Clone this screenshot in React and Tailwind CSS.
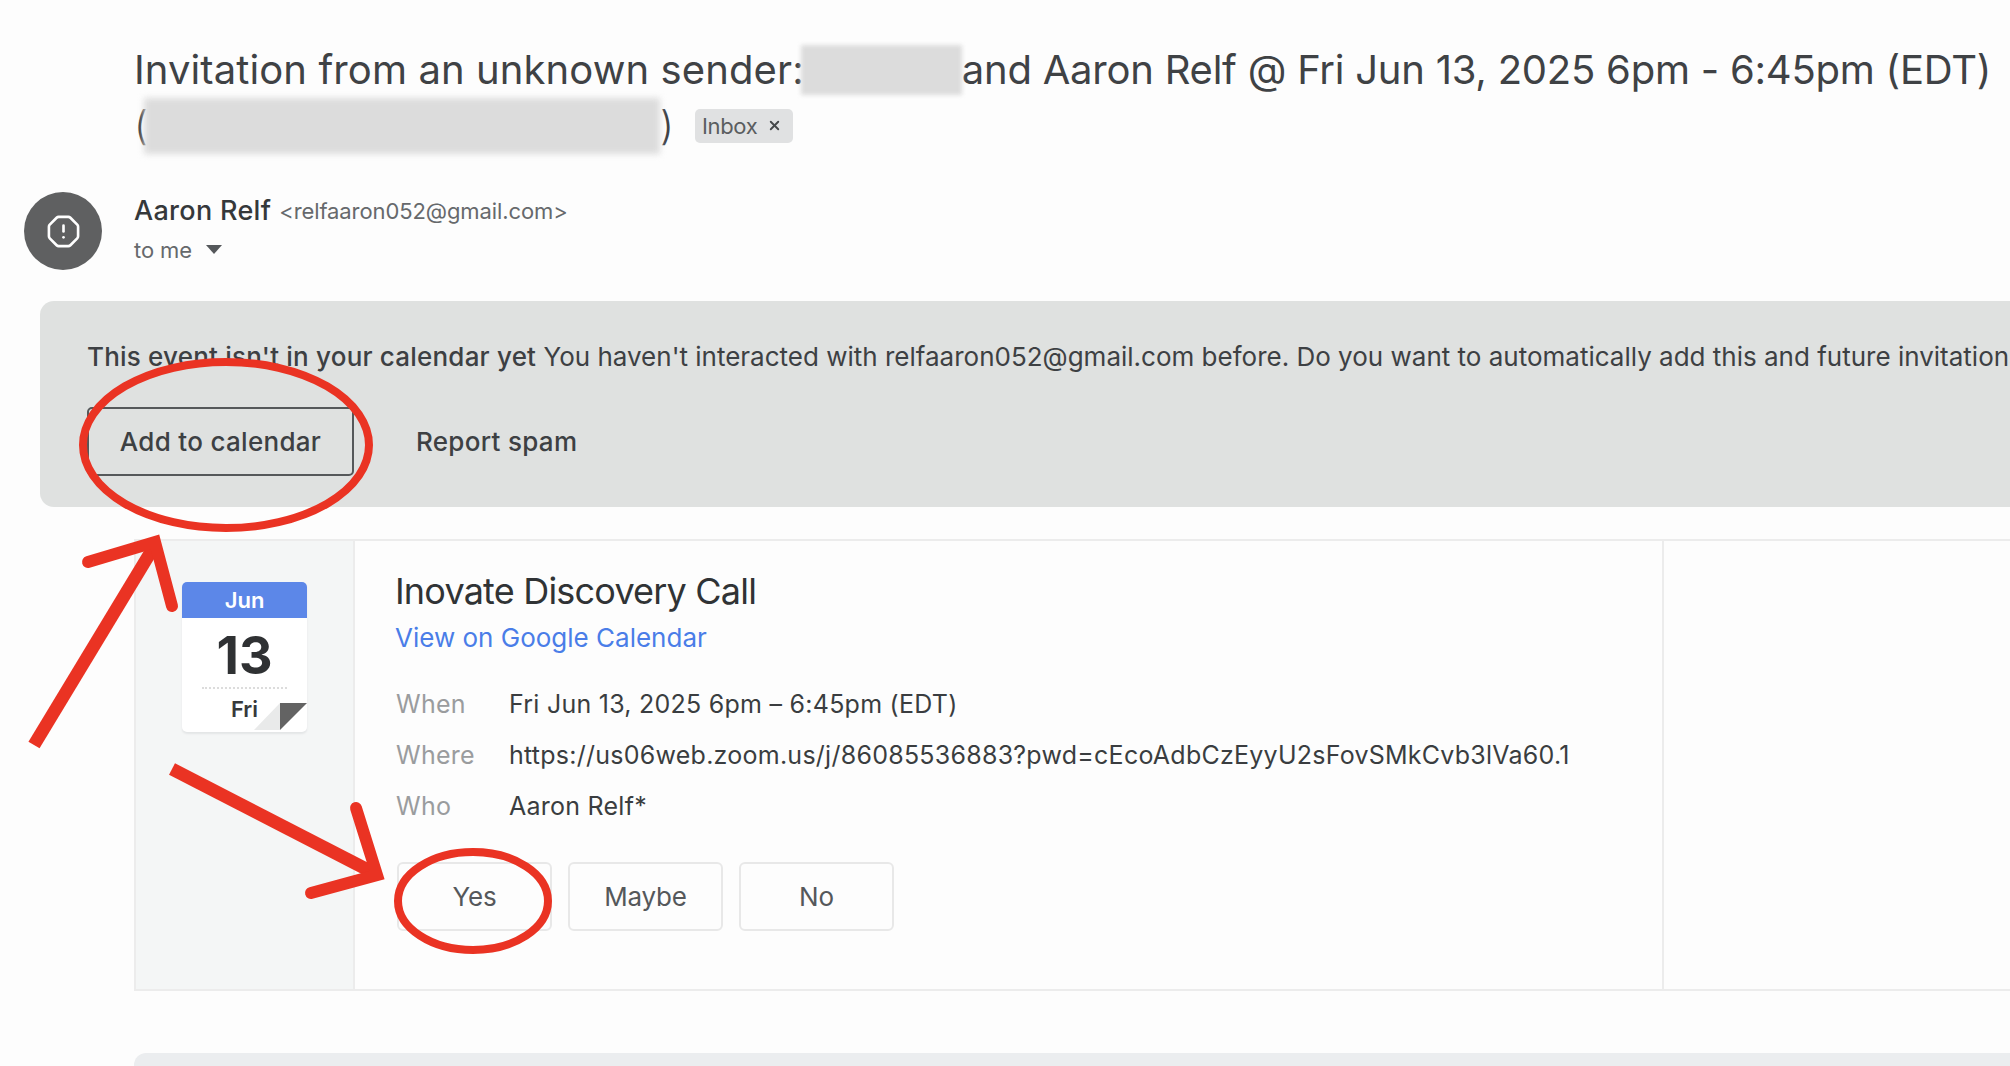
import React from "react";
import { OctagonAlert, X } from "lucide-react";

const rows = [
  { label: "When", value: "Fri Jun 13, 2025 6pm – 6:45pm (EDT)" },
  { label: "Where", value: "https://us06web.zoom.us/j/86085536883?pwd=cEcoAdbCzEyyU2sFovSMkCvb3lVa60.1" },
  { label: "Who", value: "Aaron Relf*" },
];

function DateTile() {
  return (
    <div className="relative w-[125px] h-[150px] rounded-[5px] bg-white shadow-[0_2px_2px_#e3e5e6] overflow-hidden flex flex-col items-center">
      <div className="w-full h-[36px] bg-[#5c87e8] text-white text-[22px] font-semibold leading-[36px] text-center">Jun</div>
      <div className="mt-[10px] text-[#2f3133] text-[52px] font-bold leading-[56px]">13</div>
      <div className="mt-[3px] w-[85px] border-t-2 border-dotted border-[#dcdcdc]"></div>
      <div className="mt-[5px] text-[#37393b] text-[22px] font-semibold leading-[30px]">Fri</div>
      <svg className="absolute left-0 top-0" width="125" height="150" viewBox="0 0 125 150">
        <polygon points="72,148 98,121 98,148" fill="#e9eaea" />
        <polygon points="98,121 125,121 98,148" fill="#636363" />
      </svg>
    </div>
  );
}

export default function App() {
  return (
    <div className="relative w-[2010px] h-[1066px] overflow-hidden bg-[#fdfdfd] text-[#3c3f42] font-['Inter',sans-serif]">
      {/* Subject */}
      <div className="pl-[134px] pt-[42px] text-[40px] leading-[56px] text-[#3f4245]">
        <div className="flex whitespace-nowrap">
          <span className="tracking-[0.1px]">Invitation from an unknown sender:</span>
          <span className="ml-[-3px] mt-[3px] w-[161px] h-[50px] bg-[#dcdcdc] blur-[2px]"></span>
          <span className="tracking-[-0.23px]">and Aaron Relf @ Fri Jun 13, 2025 6pm - 6:45pm (EDT)</span>
        </div>
        <div className="flex items-center h-[55px]">
          <span className="font-light">(</span>
          <span className="ml-[-4px] w-[516px] h-[56px] bg-[#dcdcdc] blur-[3px]"></span>
          <span className="font-light">)</span>
          <span className="ml-[21px] flex items-center gap-[10px] h-[34px] w-[98px] px-[7px] rounded-[5px] bg-[#e0e1e2] text-[22px] leading-none tracking-[-0.3px] text-[#5a5d60]">
            Inbox
            <X size={15} strokeWidth={3} className="text-[#45484a]" />
          </span>
        </div>
      </div>

      {/* Sender */}
      <div className="mt-[38px] ml-[24px] flex items-center gap-[32px] h-[80px]">
        <div className="w-[78px] h-[78px] rounded-full bg-[#5f6061] flex items-center justify-center text-white">
          <OctagonAlert size={35} strokeWidth={1.8} />
        </div>
        <div className="flex flex-col mt-[-3px]">
          <div className="flex items-center gap-[8px] h-[39px]">
            <span className="text-[27px] font-medium tracking-[0.3px] text-[#35383a]">Aaron Relf</span>
            <span className="text-[22px] tracking-[-0.1px] text-[#66696c]">&lt;relfaaron052@gmail.com&gt;</span>
          </div>
          <div className="mt-[1px] flex items-center gap-[14px] text-[22px] tracking-[-0.1px] leading-[36px] text-[#66696c]">
            to me
            <svg width="16" height="9" viewBox="0 0 16 9"><polygon points="0,0 16,0 8,9" fill="#55585b" /></svg>
          </div>
        </div>
      </div>

      {/* Banner */}
      <div className="mt-[30px] ml-[40px] h-[206px] rounded-l-[14px] bg-[#dfe1e0] pl-[47px] pt-[38px] overflow-hidden">
        <div className="whitespace-nowrap text-[26px] leading-[36px] text-[#3d4043]">
          <span className="font-medium tracking-[0.2px]">This event isn't in your calendar yet</span>{" "}
          You haven't interacted with relfaaron052@gmail.com before. Do you want to automatically add this and future invitations from this sender to your calendar?
        </div>
        <div className="mt-[32px] flex items-center">
          <button className="w-[267px] h-[69px] rounded-[5px] border-2 border-[#55585a] text-[26px] font-medium tracking-[0.3px] text-[#3d4043]">Add to calendar</button>
          <button className="ml-[62px] text-[26px] font-medium tracking-[0.3px] text-[#3d4043]">Report spam</button>
        </div>
      </div>

      {/* Invite card */}
      <div className="mt-[32px] ml-[134px] h-[452px] flex border-y-2 border-[#ececec]">
        <div className="w-[221px] bg-[#f4f6f6] border-x-2 border-[#ececec] pl-[46px] pt-[41px]">
          <DateTile />
        </div>
        <div className="w-[1309px] border-r-2 border-[#ececec] pl-[40px] pt-[26px]">
          <div className="text-[36px] leading-[48px] tracking-[-0.8px] text-[#303335]">Inovate Discovery Call</div>
          <div className="mt-[5px] text-[26px] leading-[36px] text-[#4a7de8]">View on Google Calendar</div>
          <div className="mt-[30px] ml-[1px] flex flex-col gap-[15px]">
            {rows.map((row) => (
              <div key={row.label} className="flex text-[25px] tracking-[0.25px] leading-[36px]">
                <span className="w-[113px] text-[#9a9c9e]">{row.label}</span>
                <span className="text-[#3a3d40] whitespace-nowrap">{row.value}</span>
              </div>
            ))}
          </div>
          <div className="mt-[38px] ml-[2px] flex gap-[16px]">
            {["Yes", "Maybe", "No"].map((label) => (
              <button key={label} className="w-[155px] h-[69px] rounded-[6px] border-2 border-[#e8e8e8] text-[26px] tracking-[-0.2px] text-[#55585b]">
                {label}
              </button>
            ))}
          </div>
        </div>
      </div>

      {/* Next message edge */}
      <div className="mt-[62px] ml-[134px] h-[20px] rounded-tl-[12px] bg-[#ebedef]"></div>

      {/* Red annotations */}
      <svg className="absolute left-0 top-0 pointer-events-none" width="2010" height="1066" viewBox="0 0 2010 1066" fill="none" stroke="#ea3323">
        <ellipse cx="226" cy="445" rx="143" ry="83" strokeWidth="8" />
        <ellipse cx="473" cy="901" rx="75" ry="49" strokeWidth="8" />
        <path d="M34 745 L155 545" strokeWidth="13" />
        <path d="M88 562 L155 542 L172 606" strokeWidth="12" strokeLinecap="round" strokeLinejoin="miter" />
        <path d="M172 769 L372 872" strokeWidth="13" />
        <path d="M356 808 L377 875 L311 893" strokeWidth="12" strokeLinecap="round" strokeLinejoin="miter" />
      </svg>
    </div>
  );
}
